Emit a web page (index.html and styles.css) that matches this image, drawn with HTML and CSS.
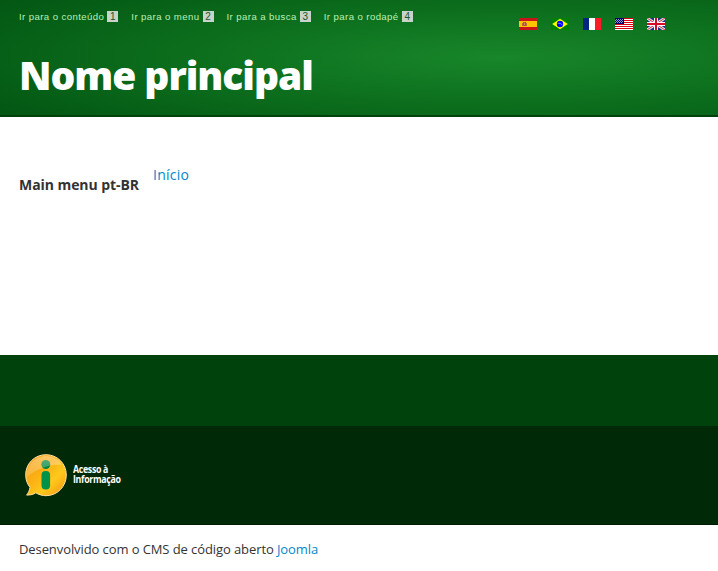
FILE: index.html
```
<!DOCTYPE html>
<html lang="pt-BR">
<head>
<meta charset="utf-8">
<title>Nome principal</title>
<link rel="stylesheet" href="styles.css">
</head>
<body>
<header class="header">
  <div class="topbar">
    <ul class="skip-links">
      <li><a href="#content">Ir para o conteúdo <span class="key">1</span></a></li>
      <li><a href="#menu">Ir para o menu <span class="key">2</span></a></li>
      <li><a href="#search">Ir para a busca <span class="key">3</span></a></li>
      <li><a href="#footer">Ir para o rodapé <span class="key">4</span></a></li>
    </ul>
    <div class="languages">
      <svg class="flag" viewBox="0 0 18 12"><path fill="#c9141e" d="M0 0h18v12H0z"/><path fill="#ffc400" d="M0 3h18v6H0z"/><path fill="#b96a32" d="M3 5h1v3H3zM7 5h1v3H7z"/><path fill="#ad5a30" d="M4 4h3v4H4z"/><path fill="#d88c65" d="M5 5h1v2H5z"/></svg>
      <svg class="flag" viewBox="0 0 18 12"><path fill="#008000" d="M0 0h18v12H0z"/><path fill="#ff0" d="M9 .8 16.800 6 9 11.200 1.200 6z"/><circle cx="9" cy="6" r="3.200" fill="#00f"/><path fill="none" stroke="#8c9cff" stroke-width=".8" d="M6.500 5.200q3-.6 5 1.800"/></svg>
      <svg class="flag" viewBox="0 0 18 12"><path fill="#fff" d="M0 0h18v12H0z"/><path fill="#00267f" d="M0 0h6v12H0z"/><path fill="#ff1a28" d="M12 0h6v12h-6z"/></svg>
      <svg class="flag" viewBox="0 0 18 12"><path fill="#fff" d="M0 0h18v12H0z"/><path stroke="#d80014" d="M0 .5h18M0 2.500h18M0 4.500h18M0 6.500h18M0 8.500h18M0 10.500h18"/><path fill="#000066" d="M0 0h9v6H0z"/><path stroke="#9c9ccc" stroke-dasharray="1 1" d="M1 1.500h8M0 2.500h8M1 3.500h8M0 4.500h8"/></svg>
      <svg class="flag" viewBox="0 0 18 12"><path fill="#18327e" d="M0 0h18v12H0z"/><path stroke="#eee" stroke-width="2.800" d="m0 0 18 12M18 0 0 12"/><path stroke="#d52b45" stroke-width="1" d="m0 0 18 12M18 0 0 12"/><path stroke="#fff" stroke-width="4" d="M9 0v12M0 6h18"/><path stroke="#d80b2b" stroke-width="2" d="M9 0v12M0 6h18"/></svg>
    </div>
  </div>
  <h1 class="site-title">Nome principal</h1>
</header>
<main class="main" id="content">
  <h2 class="menu-title">Main menu pt-BR</h2>
  <nav id="menu"><a class="menu-link" href="#">Início</a></nav>
</main>
<footer id="footer">
  <div class="footer-band"></div>
  <div class="footer-brand">
    <a class="access" href="#">
      <svg class="access-icon" viewBox="0 0 42 43">
        <defs>
          <linearGradient id="bubble" x1="0" y1="0" x2="1" y2="1"><stop offset="0" stop-color="#f39a16"/><stop offset=".4" stop-color="#fbb014"/><stop offset=".65" stop-color="#ffc91c"/><stop offset="1" stop-color="#f09010"/></linearGradient>
          <linearGradient id="shine" x1="0" y1="0" x2="0" y2="1"><stop offset="0" stop-color="#fff" stop-opacity=".35"/><stop offset="1" stop-color="#fff" stop-opacity=".14"/></linearGradient>
        </defs>
        <path d="M21 .7C9.500.7.7 9.700.7 20.800c0 6 2.200 9.900 4.300 12.500-.5 3-1.500 5.500-3.400 7.800 4.400 0 7-.8 9.300-2.300 2.800 1.800 6.500 2.900 10.100 2.900 11.400 0 20.300-9.300 20.300-20.700S32.400.7 21 .7z" fill="url(#bubble)" stroke="#ffe0a0" stroke-width="1"/>
        <circle cx="20.800" cy="10.500" r="4.500" fill="#00853a"/>
        <path d="M2 23C1 11 10 2 21 2c7 0 13 3 16 9C26 10 13 14 2 23z" fill="url(#shine)"/>
        <rect x="16.500" y="17" width="8.600" height="18.500" rx="4" fill="#009246"/>
      </svg>
      <span class="access-text"><span>Acesso à</span><span>Informação</span></span>
    </a>
  </div>
  <p class="credits">Desenvolvido com o CMS de código aberto <a href="#">Joomla</a></p>
</footer>
</body>
</html>
```
FILE: styles.css
```
* { box-sizing: border-box; }
body {
  margin: 0;
  background: #fff;
  color: #333;
  font: 14px/20px "Open Sans", sans-serif;
}
a { color: #0088cc; text-decoration: none; }
.header {
  height: 117px;
  padding: 10px 19px 0;
  border-bottom: 2px solid #00420c;
  background: radial-gradient(ellipse 640px 100px at 500px 57px, #18862a 0%, #0d701e 45%, #045a14 90%, #035512 100%);
}
.topbar { display: flex; justify-content: space-between; }
.skip-links {
  display: flex;
  gap: 13px;
  margin: 0;
  padding: 0;
  list-style: none;
  font: 9.600px/13px "Liberation Sans", sans-serif;
  letter-spacing: .41px;
}
.skip-links li { white-space: nowrap; }
.skip-links a { color: #b9f0b4; }
.key {
  display: inline-block;
  width: 11px;
  height: 11px;
  color: #18572a;
  background: #c8d3c9;
  font-size: 10px;
  line-height: 11px;
  text-align: center;
  letter-spacing: 0;
}
.languages { display: flex; gap: 14px; margin: 8px 34px 0 0; }
.flag { display: block; width: 18px; height: 12px; }
.site-title {
  margin: 25px 0 0;
  color: #fff;
  font-size: 39px;
  font-weight: 800;
  line-height: 40px;
  letter-spacing: -1.050px;
}
.main { display: flex; gap: 14px; height: 238px; padding: 48px 19px 0; }
.menu-title { margin: 10px 0 0; font-size: 14px; line-height: 20px; letter-spacing: -.06px; }
.menu-link { letter-spacing: .25px; }
.footer-band { height: 71px; background: #00420c; }
.footer-brand {
  height: 99px;
  padding: 28px 25px 0;
  background: #002907;
  border-bottom: 1px solid #001a04;
}
.access { display: inline-flex; gap: 6px; color: #fff; }
.access-icon { width: 42px; height: 43px; }
.access-text {
  display: flex;
  flex-direction: column;
  margin-top: 10px;
  font: 700 10px/10px "Open Sans", sans-serif;
  letter-spacing: -.35px;
  transform: scaleX(.88);
  transform-origin: left;
}
.credits { margin: 14px 19px 0; font-size: 13px; line-height: 20px; letter-spacing: -.09px; }
```
